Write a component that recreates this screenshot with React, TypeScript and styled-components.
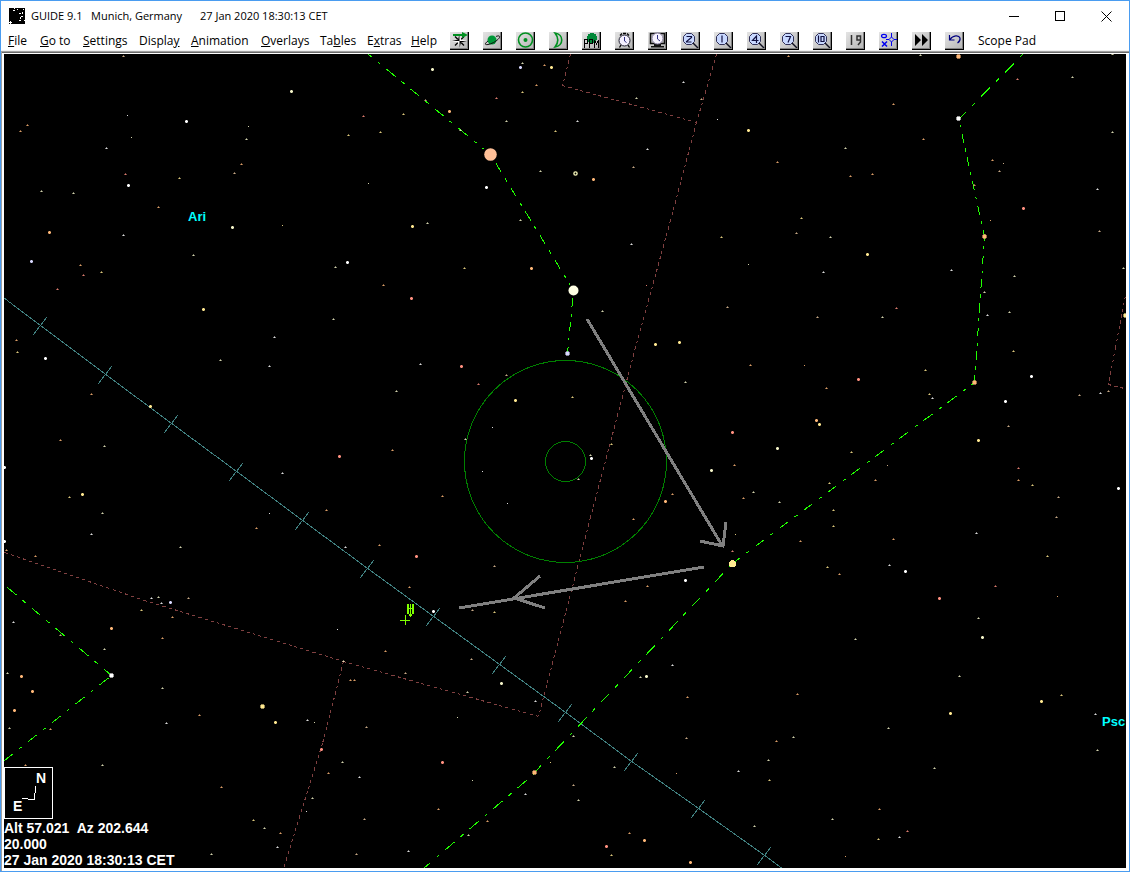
import React from 'react';
import styled, { createGlobalStyle } from 'styled-components';

const GlobalStyle = createGlobalStyle`
  *, *::before, *::after { box-sizing: border-box; }
  html, body { margin: 0; padding: 0; background: #fff; }
`;

const Window = styled.div`
  display: flex;
  flex-direction: column;
  height: 100vh;
  min-height: 480px;
  border: 1px solid #4a9cf0;
  background: #fff;
  color: #000;
  font-family: 'Open Sans', 'Noto Sans', sans-serif;
  font-size: 12px;
  overflow: hidden;
`;

const TitleBar = styled.header`
  display: flex;
  align-items: center;
  height: 30px;
  padding-left: 8px;
  flex: none;
`;

const TitleText = styled.h1`
  display: grid;
  grid-template-columns: 60px 109px auto;
  flex: 1;
  margin: 0 0 0 4px;
  font-size: 11px;
  font-weight: 400;
  line-height: 16px;
  white-space: nowrap;
`;

const CaptionButton = styled.button`
  display: grid;
  place-items: center;
  width: 46px;
  height: 29px;
  padding: 0;
  border: 0;
  background: transparent;
`;

const MenuBar = styled.nav`
  display: flex;
  align-items: center;
  height: 20px;
  padding-left: 7px;
  border-bottom: 1px solid #f0f0f0;
  flex: none;
  white-space: nowrap;
`;

const MenuList = styled.div`
  display: grid;
  grid-template-columns: 32px 43px 56px 52px 70px 59px 47px 44px 39px;
`;

const MenuButton = styled.button`
  padding: 0;
  border: 0;
  background: transparent;
  color: #000;
  font: inherit;
  line-height: 16px;
  text-align: left;
`;

const Tools = styled.div`
  display: flex;
  gap: 14px;
  margin-right: 14px;
`;

const ToolButton = styled.button`
  display: grid;
  place-items: center;
  width: 19px;
  height: 18px;
  padding: 0;
  border: solid;
  border-width: 0 1px 1px 0;
  border-color: #000;
  background: linear-gradient(135deg, #e4e4e4, #b4b4b4);
  box-shadow: inset -1px -1px 0 #808080;
`;

const Frame = styled.main`
  display: flex;
  flex: 1;
  min-height: 0;
  padding: 1px 3px 3px 2px;
  border-top: 1px solid #a0a0a0;
  border-left: 1px solid #a0a0a0;
  background: #fff;
  box-shadow: inset 0 1px 0 #696969;
`;

const Chart = styled.section`
  display: grid;
  grid-template: minmax(0, 1fr) / minmax(0, 1fr);
  flex: 1;
  margin-top: 1px;
  background: #000;
  overflow: hidden;
  font-family: 'Liberation Sans', Arial, sans-serif;
`;

const Sky = styled.svg`
  grid-area: 1 / 1;
  display: block;
  width: 100%;
  height: 100%;
`;

const Readout = styled.div`
  grid-area: 1 / 1;
  align-self: end;
  justify-self: start;
  color: #fff;
  font-size: 14px;
  font-weight: 700;
  line-height: 16px;
  white-space: pre;
`;

const Compass = styled.svg`
  display: block;
  width: 49px;
  height: 52px;
  margin-bottom: 1px;
`;

const ReadoutLine = styled.div``;

const ChartLabel = styled.text`
  fill: #00ffff;
  font-size: 13px;
  font-weight: 700;
`;

const STAR_COLORS: Record<string, string> = {
  w: '#ffffff',
  b: '#d8d8ff',
  g: '#f4f4c8',
  y: '#ffe890',
  t: '#e8c49c',
  o: '#ffb878',
  r: '#ff9080',
};

/* Each entry: x, y, colour key and magnitude class. */
const STARS = `
123 56 t1,291 91 g2,127 115 w0,186 121 w2,27 125 o1,20 131 o1,248 126 g0,246 139 g1,363 116 r1,348 135 y1,
131 137 g0,106 148 w1,241 164 o1,234 173 t1,125 174 r1,128 185 w2,179 178 y1,41 191 g1,73 193 g1,158 207 o1,
368 183 g0,232 227 g2,282 225 y0,49 232 o2,123 235 w1,193 255 g1,31 261 b2,80 265 o1,101 272 y1,83 275 r1,
347 262 w2,335 267 g1,57 289 r1,203 309 y2,333 319 g1,274 337 w1,16 340 o1,380 132 y1,432 69 g2,522 63 g1,
520 67 b2,544 65 o1,551 67 y2,536 85 o1,522 92 y1,425 100 t1,496 98 r1,449 111 o2,403 114 y1,506 121 g1,
577 121 w1,555 131 y1,460 130 g1,636 98 g1,683 82 w1,701 99 t1,717 119 w0,748 130 y2,647 149 w1,633 167 t1,
540 171 g1,593 179 o2,486 187 w2,412 226 y2,427 223 g1,520 220 g1,631 244 w1,721 237 y1,464 268 y1,531 268 o2,
748 264 g0,383 285 o1,646 285 r0,411 298 r2,602 311 g1,727 307 t1,655 344 y2,679 342 y2,
788 56 o1,920 55 g1,958 56 o3,1112 54 g1,1017 79 r1,1072 77 g1,893 104 o1,958 118 w3,923 139 o1,1112 132 g1,
845 148 g1,777 162 o1,992 160 o1,1003 163 t0,999 171 t1,850 176 o1,872 174 o1,974 185 r1,1097 189 w1,1023 208 r2,
801 218 y1,990 220 o0,796 233 t1,830 237 g1,984 236 o3,1099 231 t1,867 254 y2,823 272 w1,951 270 w1,1123 268 g1,
1014 276 g1,984 292 g1,896 308 r1,817 317 t1,882 317 g1,1009 312 g1,987 315 w1,1125 315 y3,
17 352 y1,45 358 w2,220 360 g1,269 366 w1,420 364 w1,461 366 r2,506 375 t1,478 384 r1,396 391 g1,91 394 o1,
150 406 y2,515 400 y2,492 427 w0,465 439 g1,60 440 o1,104 446 g1,392 450 o1,339 456 r2,4 467 w2,282 473 w1,
482 471 w0,82 494 y2,69 497 y1,442 496 o1,507 503 w0,102 513 g1,269 513 w0,326 510 o1,256 528 o1,91 534 w1,
4 541 w2,180 547 g1,6 550 o1,345 547 w1,379 545 o1,35 556 o1,416 556 r2,494 566 t1,409 587 o1,151 598 w1,
158 597 g1,161 603 w1,170 602 b2,188 598 t1,141 610 y1,172 617 o1,13 622 w1,433 611 w2,472 610 t1,494 612 y1,
111 628 o2,337 629 w0,162 638 o1,60 635 t1,104 649 g1,385 651 o1,471 659 t1,343 661 g1,111 675 w3,7 673 g1,
21 676 o2,405 673 t1,350 680 o1,354 680 o1,501 683 g2,32 691 o2,162 688 g1,467 692 g1,535 701 w1,262 706 y3,
14 710 o2,199 715 o1,457 717 g0,307 720 w1,314 722 g0,275 722 y2,166 723 w1,366 727 t1,9 728 g1,50 729 o1,
321 749 r2,567 353 b3,750 365 o1,804 365 o0,925 370 y1,1013 351 y1,858 379 r2,685 382 g1,1031 376 w2,826 388 o1,
974 382 o3,572 397 y1,929 394 y1,932 398 w1,1005 401 w2,1079 395 t1,1100 393 w1,1108 391 t1,816 420 o2,819 424 y2,
1008 426 t1,732 432 r2,611 444 y1,978 440 y2,777 448 g2,851 452 y1,590 455 g1,591 458 w2,734 465 o1,887 465 t0,
711 470 g2,1018 468 r1,578 479 g1,875 480 o1,1018 480 o1,829 483 y1,1032 485 y1,1118 488 w2,753 492 g1,672 494 o1,
743 498 o1,1058 497 t1,779 502 g1,665 501 o2,833 510 y1,1056 517 t1,633 519 o1,833 526 y1,976 533 w1,735 534 y0,
800 541 o1,893 539 o1,732 551 r1,732 563 y4,1047 556 y1,889 565 w1,827 567 y1,905 571 w2,839 574 o1,685 580 w2,
647 586 o1,995 586 r1,625 601 o1,939 598 r2,1057 596 o0,978 618 g1,982 637 g2,855 639 g1,672 665 w1,640 677 g1,
646 676 g2,959 676 g1,797 694 o1,687 697 o1,1061 695 y1,1041 701 y2,1095 714 w1,950 713 y2,888 728 g1,573 736 g1,
686 738 t1,793 737 g1,776 741 o1,1097 750 g1,442 762 r2,342 762 g1,768 760 g1,934 768 g1,614 767 g1,550 762 y0,
534 772 o3,328 773 o1,738 771 w1,676 773 o0,359 777 w1,472 780 g0,769 780 y1,221 787 o1,573 785 t1,525 794 w1,
312 798 g1,578 800 g1,438 809 o1,306 811 w0,879 809 o1,832 819 g1,364 819 t1,253 820 y1,487 821 o1,754 826 g1,
264 828 g1,280 833 o1,629 833 o1,468 835 g1,907 831 r1,899 837 w1,878 839 y1,644 840 o2,606 846 r2,277 847 w1,
408 851 w1,211 854 g1,356 854 t1,611 855 y1,845 856 o0,690 862 o2,25 765 o1,102 765 g1`
  .split(',')
  .map((entry) => {
    const [x, y, kind] = entry.trim().split(' ');
    return { x: Number(x), y: Number(y), color: STAR_COLORS[kind[0]], size: Number(kind[1]) };
  });

function Star({ x, y, color, size }: { x: number; y: number; color: string; size: number }) {
  if (size === 0) return <rect x={x} y={y} width={1} height={1} fill={color} opacity={0.85} />;
  if (size === 1)
    return (
      <g fill={color}>
        <path d={`M${x - 1} ${y}h3v1h-3zM${x} ${y - 1}h1v1h-1z`} opacity={0.5} />
        <rect x={x} y={y} width={1} height={1} opacity={0.7} />
      </g>
    );
  if (size === 2)
    return (
      <g fill={color}>
        <rect x={x - 1} y={y - 1} width={3} height={3} opacity={0.55} />
        <path d={`M${x - 1} ${y}h3v1h-3zM${x} ${y - 1}h1v3h-1z`} />
      </g>
    );
  if (size === 3)
    return (
      <g fill={color}>
        <rect x={x - 2} y={y - 1} width={5} height={3} opacity={0.6} />
        <rect x={x - 1} y={y - 2} width={3} height={5} opacity={0.6} />
        <rect x={x - 1} y={y - 1} width={3} height={3} />
      </g>
    );
  return <circle cx={x + 0.5} cy={y + 0.5} r={3.5} fill={color} />;
}

/* A dashed line whose pattern is counted along the longer axis, as raster pens do. */
function PenLine({ from, to, pattern, offset = 0 }: { from: number[]; to: number[]; pattern: number[]; offset?: number }) {
  const dx = to[0] - from[0];
  const dy = to[1] - from[1];
  const scale = Math.hypot(dx, dy) / Math.max(Math.abs(dx), Math.abs(dy));
  return (
    <line
      x1={from[0] + 0.5}
      y1={from[1] + 0.5}
      x2={to[0] + 0.5}
      y2={to[1] + 0.5}
      strokeDasharray={pattern.map((n) => n * scale).join(' ')}
      strokeDashoffset={offset * scale}
    />
  );
}

const FIGURES: [number[], number[], number][] = [
  [[362, 49], [490, 154], 0],
  [[490, 154], [573, 290], 15],
  [[573, 290], [567, 353], 16],
  [[1037, 39], [959, 118], 0],
  [[958, 118], [984, 236], 9],
  [[984, 236], [974, 382], 5],
  [[974, 382], [732, 563], 6],
  [[732, 563], [534, 772], 14],
  [[534, 773], [423, 868], 16],
  [[7, 587], [111, 675], 0],
  [[111, 675], [4, 760], 21],
];

const BOUNDARIES: number[][][] = [
  [[570, 54], [562, 85], [696, 122]],
  [[716, 54], [696, 122], [670, 220], [635, 347], [590, 517], [565, 613], [538, 716]],
  [[4, 552], [144, 600], [343, 661], [538, 716]],
  [[343, 661], [322, 743], [283, 868]],
  [[1126, 290], [1115, 347], [1108, 384], [1128, 389]],
];

const ECLIPTIC = [
  [40, 325], [105, 374], [171, 423], [236, 471], [302, 520], [367, 568],
  [433, 616], [499, 664], [565, 712], [631, 761], [698, 808], [764, 855],
];

function SkyChart() {
  return (
    <Sky role="img" aria-label="Star chart between Aries and Pisces" shapeRendering="crispEdges">
      <g transform="translate(-4 -54)">
        <g stroke="#804040">
          {BOUNDARIES.map((points, b) =>
            points.slice(1).map((point, i) => (
              <PenLine key={`${b}-${i}`} from={points[i]} to={point} pattern={[3, 3]} />
            )),
          )}
        </g>
        <g stroke="#408080" fill="none">
          <polyline points={[[4, 298], ...ECLIPTIC, [783, 869]].map((p) => p.join(',')).join(' ')} />
          {ECLIPTIC.map(([x, y]) => (
            <line key={x} x1={x + 7} y1={y - 8} x2={x - 7} y2={y + 10} />
          ))}
        </g>
        <g stroke="#008000" fill="none">
          <circle cx="565.5" cy="461.5" r="101" />
          <circle cx="565.5" cy="461.5" r="20" />
        </g>
        <g stroke="#20ff00">
          {FIGURES.map(([from, to, offset], i) => (
            <PenLine key={i} from={from} to={to} pattern={[9, 6, 3, 6]} offset={offset} />
          ))}
        </g>
        {STARS.map((star, i) => (
          <Star key={i} {...star} />
        ))}
        <circle cx="490.5" cy="154.5" r="8" fill="#000" />
        <circle cx="573.5" cy="290.5" r="7" fill="#000" />
        <g shapeRendering="auto">
          <circle cx="490.5" cy="154.5" r="6.3" fill="#ffc098" />
          <circle cx="573.5" cy="290.5" r="5" fill="#ffffe4" />
          <circle cx="575.5" cy="173.5" r="1.6" fill="none" stroke="#f4f4b8" strokeWidth="1.4" />
        </g>
        <g stroke="#808080" strokeWidth="3" fill="none">
          <path d="M587 319L723 547M726 522L723 546L700 541" />
          <path d="M704 567L459 608M540 576L514 598L545 608" />
        </g>
        <g fill="#80ff00">
          <path d="M400 620h10v1h-10zM405 615h1v10h-1z" />
          <path d="M407 604h2v10h-2zM410 604h1v10h-1zM412 604h2v10h-2zM407 608h7v1h-7zM409 614h3v2h-3zM410 616h1v1h-1z" />
        </g>
        <ChartLabel x="188" y="221">Ari</ChartLabel>
        <ChartLabel x="1102" y="726">Psc</ChartLabel>
      </g>
    </Sky>
  );
}

function Lens({ children }: { children: React.ReactNode }) {
  return (
    <svg width="17" height="16" viewBox="0 0 17 16" fill="none">
      <path d="M11 11l5 5" stroke="#101020" strokeWidth="1.4" />
      <path d="M4.5 1.5h5l3 3v5l-3 3h-5l-3-3v-5z" fill="#c8d8ff" stroke="#303058" />
      <g stroke="#101040" strokeWidth="1.2">{children}</g>
    </svg>
  );
}

const Icon = (props: React.SVGProps<SVGSVGElement>) => (
  <svg width="17" height="16" viewBox="0 0 17 16" fill="none" {...props} />
);

const TOOLS: { name: string; icon: React.ReactNode }[] = [
  {
    name: 'Find star',
    icon: (
      <Icon>
        <path d="M4 4.500l9 9M13 4.500l-9 9" stroke="#000" strokeWidth="1.300" />
        <path d="M8.500 2L10 7.500L16 9L10 10.500L8.500 16L7 10.500L1 9L7 7.500z" fill="#fff" />
        <path d="M8.500 2V9H1L7 7.500zM8.500 9H16L10 10.500L8.500 16z" fill="#000" />
        <path d="M2 3h10" stroke="#009020" strokeWidth="2" />
        <path d="M11 0l6 3-6 3z" fill="#009020" />
      </Icon>
    ),
  },
  {
    name: 'Find planet',
    icon: (
      <Icon>
        <circle cx="8" cy="8" r="4.500" fill="#009838" />
        <path d="M4 9C0 12 1 13 4 12.500C9 12 17 6 15.500 4.300C15 3.500 13 4 12 4.500" stroke="#101010" />
      </Icon>
    ),
  },
  {
    name: 'Find Sun',
    icon: (
      <Icon>
        <circle cx="8.500" cy="8" r="7" stroke="#009020" strokeWidth="1.600" />
        <circle cx="8.500" cy="8" r="2" fill="#009020" />
      </Icon>
    ),
  },
  {
    name: 'Find Moon',
    icon: (
      <Icon>
        <path d="M5 1C14 2 14 14 5 15C9 10 9 6 5 1z" stroke="#009020" strokeWidth="1.600" />
      </Icon>
    ),
  },
  {
    name: 'PPM catalogue',
    icon: (
      <Icon shapeRendering="crispEdges">
        <circle cx="9" cy="6" r="5" fill="#008838" />
        <path d="M1.500 16V7.500h3v4h-3M6.500 16V7.500h3v4h-3M11.500 16V8l2 4 2-4v8" stroke="#000" />
      </Icon>
    ),
  },
  {
    name: 'Set time',
    icon: (
      <Icon>
        <path d="M7 1.500h3M4 3.500l2-2M13 3.500l-2-2M5 13l-1.500 2.500M12 13l1.500 2.500" stroke="#000" strokeWidth="1.300" />
        <circle cx="8.500" cy="8.500" r="5.500" fill="#f4f0ff" stroke="#202030" />
        <path d="M8.500 5v4l2 1.500" stroke="#303080" />
      </Icon>
    ),
  },
  {
    name: 'Current time',
    icon: (
      <Icon>
        <path d="M1.500 1.500h14v10h-14z" fill="#b8b8b8" stroke="#101010" strokeWidth="1.500" />
        <path d="M5 12h7v2H5zM2 14h13v1.500H2z" fill="#101010" />
        <circle cx="8.500" cy="6.500" r="5.500" fill="#f8f4ff" stroke="#8880a0" />
        <path d="M8.500 3v4l2.500 2" stroke="#303080" />
      </Icon>
    ),
  },
  { name: 'Level 2', icon: <Lens><path d="M4.500 4.500h5v1l-5 4v.5h5" /></Lens> },
  { name: 'Level 1', icon: <Lens><path d="M7 3.500v7" /></Lens> },
  { name: 'Level 4', icon: <Lens><path d="M8.500 11V4L4.500 8.500h6" /></Lens> },
  { name: 'Level 7', icon: <Lens><path d="M4.500 4.500h5L7 10.500" /></Lens> },
  { name: 'Level 10', icon: <Lens><path d="M4.500 3.500v7M7 4.500h3v5H7z" /></Lens> },
  {
    name: 'Chart magnitude 19',
    icon: (
      <Icon>
        <path d="M4.500 3v10M13.500 8H10V4h3.500v6L11 13" stroke="#303030" strokeWidth="1.500" />
      </Icon>
    ),
  },
  {
    name: 'Toggle objects',
    icon: (
      <Icon>
        <ellipse cx="4" cy="4" rx="2.500" ry="1.700" stroke="#0000f0" strokeWidth="1.200" />
        <path d="M2 9.500l5 5M7 9.500l-5 5" stroke="#0000f0" strokeWidth="1.500" />
        <path d="M11.500 5L14 7.500L11.500 10L9 7.500zM11.500 1v4M11.500 10v4M6 7.500h3M14 7.500h3" stroke="#0000f0" />
      </Icon>
    ),
  },
  {
    name: 'Animate forward',
    icon: (
      <Icon>
        <path d="M2 2l6 6-6 6zM9 2l6 6-6 6z" fill="#000" />
      </Icon>
    ),
  },
  {
    name: 'Undo',
    icon: (
      <Icon>
        <path d="M3.500 3v5h5M4 7.500C7 3 13 3 14 6C14.500 8.500 13 10 11.500 11" stroke="#000080" strokeWidth="1.200" />
      </Icon>
    ),
  },
];

/* The access key letter is marked by a preceding ampersand. */
const MENUS = ['&File', '&Go to', '&Settings', 'Displa&y', '&Animation', '&Overlays', 'Ta&bles', 'E&xtras', '&Help'];

function MenuLabel({ text }: { text: string }) {
  const [before, after] = text.split('&');
  return (
    <>
      {before}
      <u>{after[0]}</u>
      {after.slice(1)}
    </>
  );
}

export default function App() {
  return (
    <>
      <GlobalStyle />
      <Window>
        <TitleBar>
          <svg width="18" height="17" viewBox="0 0 18 17" shapeRendering="crispEdges" aria-hidden="true">
            <path d="M0 0h16v16H0z" />
            <path
              d="M1 13h1v1h1v1H2v1H1v-1H0v-1h1zM10 5h2v1h-2zM13 4h1v2h-1zM12 8h2v1h-2zM11 9h1v2h-1zM10 12h2v1h-2zM4 2h2v1H4zM8 1h1v1H8zM14 1h1v1h-1zM5 0h1v1H5zM15 12h1v1h-1z"
              fill="#fff"
            />
          </svg>
          <TitleText>
            <span>GUIDE 9.1</span>
            <span>Munich, Germany</span>
            <span>27 Jan 2020 18:30:13 CET</span>
          </TitleText>
          <CaptionButton aria-label="Minimize">
            <svg width="11" height="11" shapeRendering="crispEdges">
              <path d="M0 5.500h10" stroke="#000" />
            </svg>
          </CaptionButton>
          <CaptionButton aria-label="Maximize">
            <svg width="11" height="11" shapeRendering="crispEdges">
              <path d="M.5.500h9v9h-9z" stroke="#000" fill="none" />
            </svg>
          </CaptionButton>
          <CaptionButton aria-label="Close">
            <svg width="11" height="11">
              <path d="M.5.500l10 10M10.500.500l-10 10" stroke="#000" />
            </svg>
          </CaptionButton>
        </TitleBar>
        <MenuBar>
          <MenuList>
            {MENUS.map((text) => (
              <MenuButton key={text}>
                <MenuLabel text={text} />
              </MenuButton>
            ))}
          </MenuList>
          <Tools>
            {TOOLS.map(({ name, icon }) => (
              <ToolButton key={name} aria-label={name}>
                {icon}
              </ToolButton>
            ))}
          </Tools>
          <MenuButton>Scope Pad</MenuButton>
        </MenuBar>
        <Frame>
          <Chart>
            <SkyChart />
            <Readout>
              <Compass viewBox="0 0 49 52" shapeRendering="crispEdges">
                <path d="M.5.500h48v51H.5z" fill="none" stroke="#fff" />
                <path d="M32 19L30 33L18 31" fill="none" stroke="#fff" />
                <text x="32" y="16" fill="#fff">N</text>
                <text x="9" y="44" fill="#fff">E</text>
              </Compass>
              <ReadoutLine>Alt 57.021  Az 202.644</ReadoutLine>
              <ReadoutLine>20.000</ReadoutLine>
              <ReadoutLine>27 Jan 2020 18:30:13 CET</ReadoutLine>
            </Readout>
          </Chart>
        </Frame>
      </Window>
    </>
  );
}
